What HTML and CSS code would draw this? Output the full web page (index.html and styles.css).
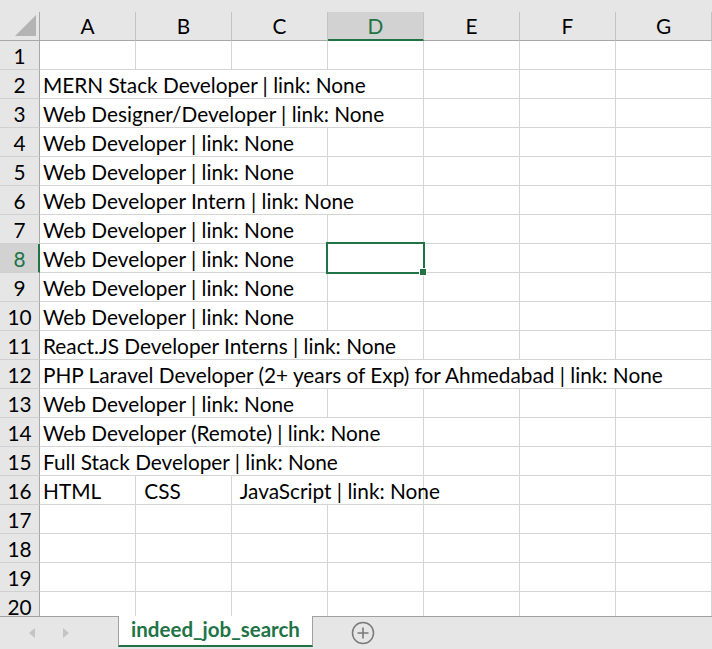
FILE: index.html
```
<!DOCTYPE html>
<html>
<head>
<meta charset="utf-8">
<link rel="stylesheet" href="styles.css">
</head>
<body>
<div class="app">
  <div class="sheet">
    <div class="hdr-row">
      <div class="corner"><svg width="39" height="28" viewBox="0 0 39 28"><polygon points="15,24 36,24 36,3" fill="#b4b4b4"/></svg></div>
      <div class="ch">A</div><div class="ch">B</div><div class="ch">C</div><div class="ch ch-sel">D</div><div class="ch">E</div><div class="ch">F</div><div class="ch">G</div>
    </div>
    <div class="row"><div class="rh">1</div><div class="c"></div><div class="c"></div><div class="c"></div><div class="c"></div><div class="c"></div><div class="c"></div><div class="c"></div></div>
    <div class="row"><div class="rh">2</div><div class="c s4">MERN Stack Developer | link: None</div><div class="c"></div><div class="c"></div><div class="c"></div></div>
    <div class="row"><div class="rh">3</div><div class="c s4">Web Designer/Developer | link: None</div><div class="c"></div><div class="c"></div><div class="c"></div></div>
    <div class="row"><div class="rh">4</div><div class="c s3">Web Developer | link: None</div><div class="c"></div><div class="c"></div><div class="c"></div><div class="c"></div></div>
    <div class="row"><div class="rh">5</div><div class="c s3">Web Developer | link: None</div><div class="c"></div><div class="c"></div><div class="c"></div><div class="c"></div></div>
    <div class="row"><div class="rh">6</div><div class="c s4">Web Developer Intern | link: None</div><div class="c"></div><div class="c"></div><div class="c"></div></div>
    <div class="row"><div class="rh">7</div><div class="c s3">Web Developer | link: None</div><div class="c"></div><div class="c"></div><div class="c"></div><div class="c"></div></div>
    <div class="row"><div class="rh rh-sel">8</div><div class="c s3">Web Developer | link: None</div><div class="c"></div><div class="c"></div><div class="c"></div><div class="c"></div></div>
    <div class="row"><div class="rh">9</div><div class="c s3">Web Developer | link: None</div><div class="c"></div><div class="c"></div><div class="c"></div><div class="c"></div></div>
    <div class="row"><div class="rh">10</div><div class="c s3">Web Developer | link: None</div><div class="c"></div><div class="c"></div><div class="c"></div><div class="c"></div></div>
    <div class="row"><div class="rh">11</div><div class="c s4">React.JS Developer Interns | link: None</div><div class="c"></div><div class="c"></div><div class="c"></div></div>
    <div class="row"><div class="rh">12</div><div class="c s7">PHP Laravel Developer (2+ years of Exp) for Ahmedabad | link: None</div></div>
    <div class="row"><div class="rh">13</div><div class="c s3">Web Developer | link: None</div><div class="c"></div><div class="c"></div><div class="c"></div><div class="c"></div></div>
    <div class="row"><div class="rh">14</div><div class="c s4">Web Developer (Remote) | link: None</div><div class="c"></div><div class="c"></div><div class="c"></div></div>
    <div class="row"><div class="rh">15</div><div class="c s4">Full Stack Developer | link: None</div><div class="c"></div><div class="c"></div><div class="c"></div></div>
    <div class="row"><div class="rh">16</div><div class="c">HTML</div><div class="c pre"> CSS</div><div class="c s2 pre"> JavaScript | link: None</div><div class="c"></div><div class="c"></div><div class="c"></div></div>
    <div class="row"><div class="rh">17</div><div class="c"></div><div class="c"></div><div class="c"></div><div class="c"></div><div class="c"></div><div class="c"></div><div class="c"></div></div>
    <div class="row"><div class="rh">18</div><div class="c"></div><div class="c"></div><div class="c"></div><div class="c"></div><div class="c"></div><div class="c"></div><div class="c"></div></div>
    <div class="row"><div class="rh">19</div><div class="c"></div><div class="c"></div><div class="c"></div><div class="c"></div><div class="c"></div><div class="c"></div><div class="c"></div></div>
    <div class="row"><div class="rh">20</div><div class="c"></div><div class="c"></div><div class="c"></div><div class="c"></div><div class="c"></div><div class="c"></div><div class="c"></div></div>
    <div class="sel"><span class="handle"></span></div>
  </div>
  <div class="tabbar">
    <div class="nav">
      <svg width="6" height="10" viewBox="0 0 6 10"><polygon points="6,0 6,10 0,5" fill="#c4c4c4"/></svg>
      <svg width="6" height="10" viewBox="0 0 6 10"><polygon points="0,0 0,10 6,5" fill="#c4c4c4"/></svg>
    </div>
    <div class="tab">indeed_job_search</div>
    <div class="rest">
      <svg width="24" height="24" viewBox="0 0 24 24"><circle cx="12" cy="12" r="10.5" fill="none" stroke="#7a7a7a" stroke-width="1.5"/><path d="M12 6.5v11M6.5 12h11" stroke="#7a7a7a" stroke-width="1.6"/></svg>
    </div>
  </div>
</div>
</body>
</html>
```
FILE: styles.css
```
* { box-sizing: border-box; }
html, body { margin: 0; padding: 0; background: #fff; }
body { font-family: Lato, "Liberation Sans", sans-serif; font-size: 20.8px; color: #000; }
.app { width: 712px; height: 649px; overflow: hidden; }
.sheet { position: relative; height: 616px; overflow: hidden; }
.hdr-row { display: grid; grid-template-columns: 40px repeat(7, 96px); padding-top: 12px; background: #e6e6e6; height: 41px; }
.corner { border-right: 1px solid #a8a8a8; border-bottom: 1px solid #a8a8a8; height: 29px; }
.corner svg { display: block; }
.ch { height: 29px; border-right: 1px solid #c4c4c4; border-bottom: 1px solid #a8a8a8; text-align: center; line-height: 28px; }
.ch-sel { background: #d2d2d2; color: #217346; border-bottom: 2px solid #217346; }
.row { display: grid; grid-template-columns: 40px repeat(7, 96px); grid-template-rows: 29px; height: 29px; }
.rh { height: 29px; background: #e6e6e6; border-right: 1px solid #a8a8a8; border-bottom: 1px solid #d0d0d0; text-align: center; line-height: 30px; }
.rh-sel { background: #d2d2d2; color: #217346; border-right: 2px solid #217346; padding-left: 1px; }
.c { height: 29px; border-right: 1px solid #d4d4d4; border-bottom: 1px solid #d4d4d4; white-space: nowrap; line-height: 30px; padding-left: 3px; }
.pre { white-space: pre; }
.s2 { grid-column: span 2; }
.s3 { grid-column: span 3; }
.s4 { grid-column: span 4; }
.s7 { grid-column: span 7; }
.sel { position: absolute; left: 326px; top: 242px; width: 99px; height: 32px; border: 2px solid #217346; }
.handle { position: absolute; left: 91px; top: 24px; width: 8px; height: 8px; background: #217346; border: 1px solid #fff; }
.tabbar { display: flex; height: 33px; background: #e6e6e6; }
.nav { width: 118px; border-top: 1px solid #a0a0a0; display: flex; align-items: flex-start; padding-top: 11px; padding-left: 29px; gap: 28px; }
.nav svg { display: block; }
.tab { width: 195px; height: 31px; background: #fff; border-left: 1px solid #a0a0a0; border-right: 1px solid #a0a0a0; border-bottom: 2px solid #217346; color: #217346; font-weight: 700; font-size: 20.5px; text-align: center; line-height: 26px; }
.rest { flex: 1; border-top: 1px solid #a0a0a0; display: flex; align-items: center; padding-left: 38px; }
.rest svg { display: block; }
```
